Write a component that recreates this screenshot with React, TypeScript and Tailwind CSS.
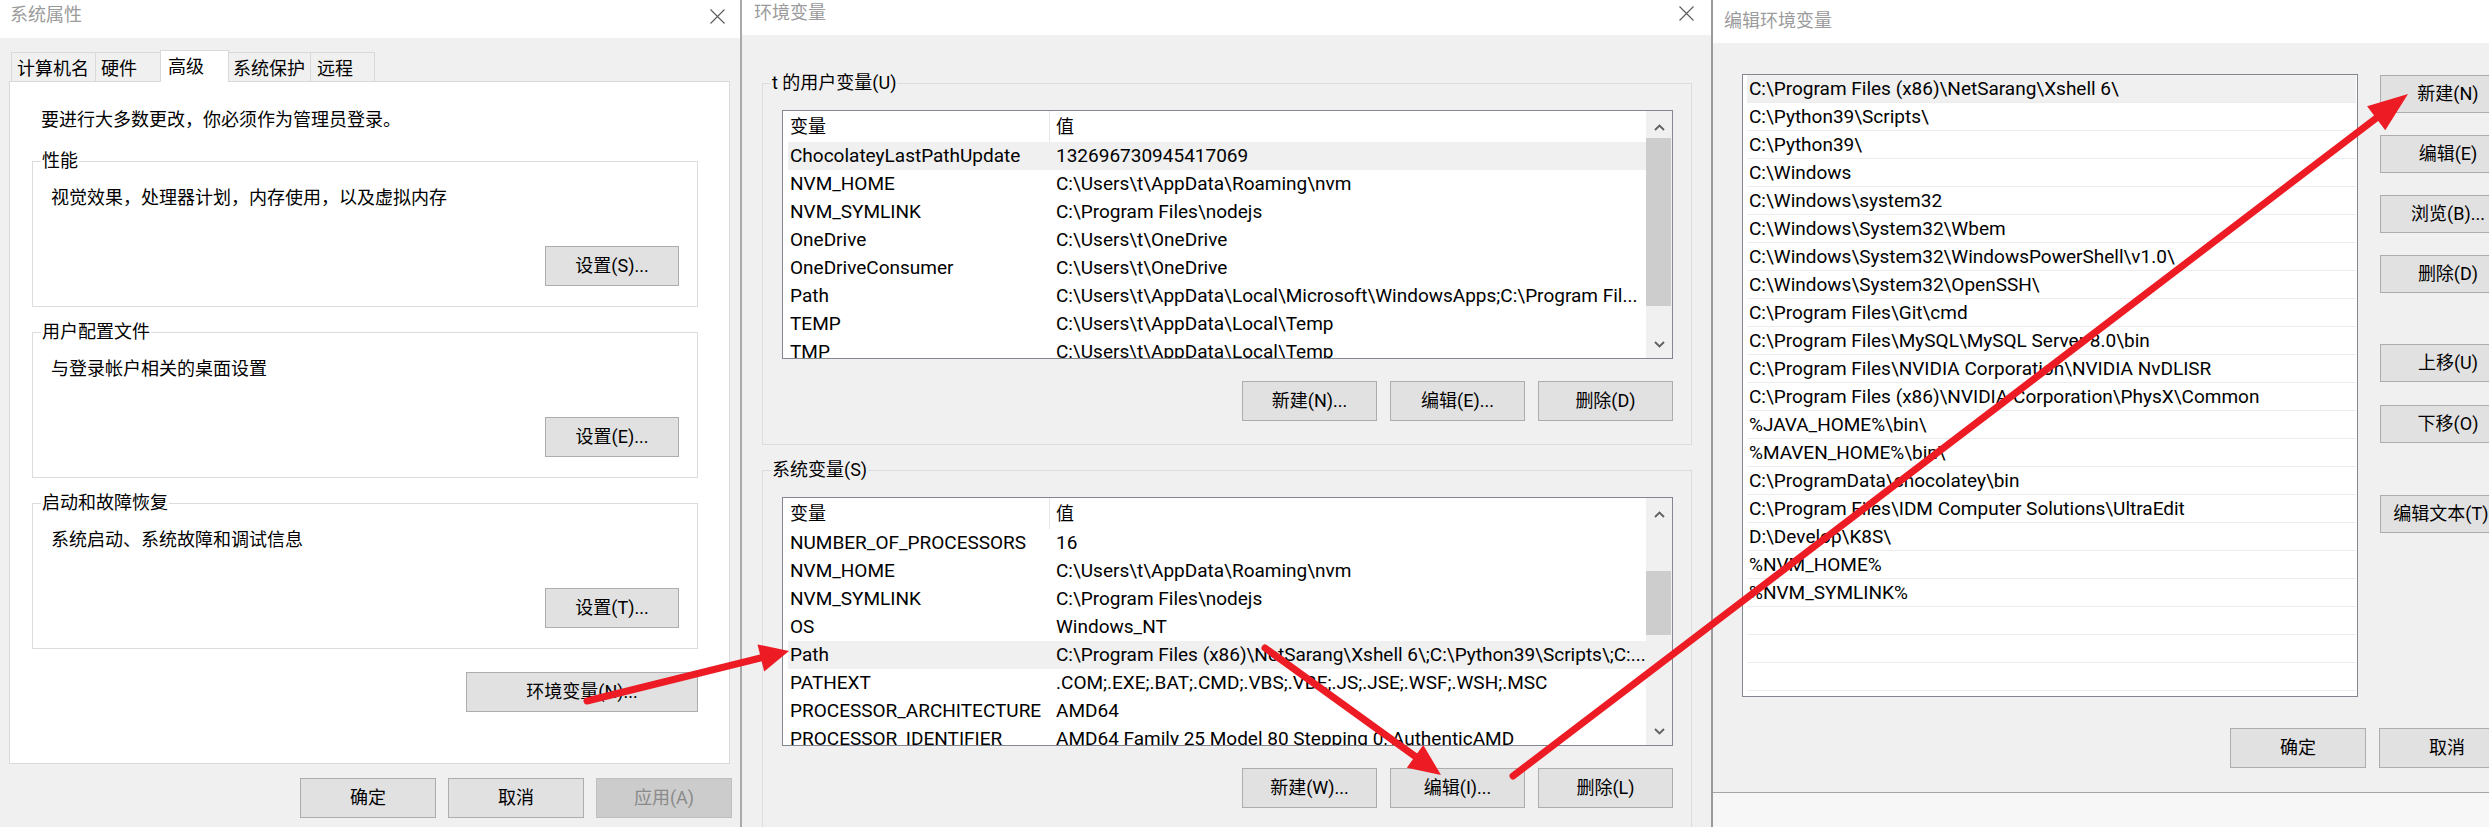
import React from 'react'

type Row = [string, string]

const userVars: Row[] = [
  ['ChocolateyLastPathUpdate', '132696730945417069'],
  ['NVM_HOME', 'C:\\Users\\t\\AppData\\Roaming\\nvm'],
  ['NVM_SYMLINK', 'C:\\Program Files\\nodejs'],
  ['OneDrive', 'C:\\Users\\t\\OneDrive'],
  ['OneDriveConsumer', 'C:\\Users\\t\\OneDrive'],
  ['Path', 'C:\\Users\\t\\AppData\\Local\\Microsoft\\WindowsApps;C:\\Program Fil...'],
  ['TEMP', 'C:\\Users\\t\\AppData\\Local\\Temp'],
  ['TMP', 'C:\\Users\\t\\AppData\\Local\\Temp'],
]

const systemVars: Row[] = [
  ['NUMBER_OF_PROCESSORS', '16'],
  ['NVM_HOME', 'C:\\Users\\t\\AppData\\Roaming\\nvm'],
  ['NVM_SYMLINK', 'C:\\Program Files\\nodejs'],
  ['OS', 'Windows_NT'],
  ['Path', 'C:\\Program Files (x86)\\NetSarang\\Xshell 6\\;C:\\Python39\\Scripts\\;C:...'],
  ['PATHEXT', '.COM;.EXE;.BAT;.CMD;.VBS;.VBE;.JS;.JSE;.WSF;.WSH;.MSC'],
  ['PROCESSOR_ARCHITECTURE', 'AMD64'],
  ['PROCESSOR_IDENTIFIER', 'AMD64 Family 25 Model 80 Stepping 0, AuthenticAMD'],
]

const pathEntries = [
  'C:\\Program Files (x86)\\NetSarang\\Xshell 6\\',
  'C:\\Python39\\Scripts\\',
  'C:\\Python39\\',
  'C:\\Windows',
  'C:\\Windows\\system32',
  'C:\\Windows\\System32\\Wbem',
  'C:\\Windows\\System32\\WindowsPowerShell\\v1.0\\',
  'C:\\Windows\\System32\\OpenSSH\\',
  'C:\\Program Files\\Git\\cmd',
  'C:\\Program Files\\MySQL\\MySQL Server 8.0\\bin',
  'C:\\Program Files\\NVIDIA Corporation\\NVIDIA NvDLISR',
  'C:\\Program Files (x86)\\NVIDIA Corporation\\PhysX\\Common',
  '%JAVA_HOME%\\bin\\',
  '%MAVEN_HOME%\\bin\\',
  'C:\\ProgramData\\chocolatey\\bin',
  'C:\\Program Files\\IDM Computer Solutions\\UltraEdit',
  'D:\\Develop\\K8S\\',
  '%NVM_HOME%',
  '%NVM_SYMLINK%',
  '',
  '',
  '',
]

const CloseIcon = () => (
  <svg width="15" height="15" viewBox="0 0 15 15" className="shrink-0">
    <path d="M0.5 0.5L14.5 14.5M14.5 0.5L0.5 14.5" stroke="#5a5a5a" strokeWidth="1.1" fill="none" />
  </svg>
)

const Chevron = ({ down = false }: { down?: boolean }) => (
  <svg width="11" height="7" viewBox="0 0 11 7">
    <path
      d={down ? 'M1 1L5.5 5.5L10 1' : 'M1 6L5.5 1.5L10 6'}
      stroke="#606060"
      strokeWidth="1.8"
      fill="none"
    />
  </svg>
)

const Btn = ({
  children,
  className = '',
  disabled = false,
}: {
  children: React.ReactNode
  className?: string
  disabled?: boolean
}) => (
  <button
    className={`flex shrink-0 items-center justify-center whitespace-nowrap border text-[18px] leading-[24px] ${
      disabled
        ? 'border-[#bfbfbf] bg-[#cccccc] text-[#8a8a8a]'
        : 'border-[#adadad] bg-[#e1e1e1] text-black'
    } ${className}`}
  >
    {children}
  </button>
)

const GroupBox = ({
  label,
  labelBg,
  className = '',
  children,
}: {
  label: string
  labelBg: string
  className?: string
  children: React.ReactNode
}) => (
  <div className={`relative shrink-0 border border-[#dcdcdc] ${className}`}>
    <span className={`absolute -top-[13px] left-[8px] px-px text-[18px] leading-[24px] whitespace-nowrap ${labelBg}`}>
      {label}
    </span>
    {children}
  </div>
)

const VarList = ({
  rows,
  highlight,
  thumbClass,
}: {
  rows: Row[]
  highlight: number
  thumbClass: string
}) => (
  <div className="flex h-[249px] shrink-0 overflow-hidden border border-[#828790] bg-white">
    <div className="min-w-0 flex-1 overflow-hidden">
      <div className="flex h-[31px] items-center text-[18px] leading-[24px]">
        <div className="flex h-full w-[267px] items-center border-r border-[#e5e5e5] pl-[7px]">变量</div>
        <div className="pl-[6px]">值</div>
      </div>
      {rows.map(([name, value], i) => (
        <div
          key={name + i}
          className={`ml-[5px] flex h-[28px] items-center whitespace-nowrap text-[19px] leading-[28px] ${
            i === highlight ? 'bg-[#f0f0f0]' : ''
          }`}
        >
          <div className="w-[261px] shrink-0 overflow-hidden pl-[2px]">{name}</div>
          <div className="min-w-0 flex-1 overflow-hidden pl-[7px]">{value}</div>
        </div>
      ))}
    </div>
    <div className="flex w-[26px] shrink-0 flex-col bg-[#f0f0f0]">
      <div className="flex h-[27px] shrink-0 items-center justify-center pt-[5px]">
        <Chevron />
      </div>
      <div className={`w-[25px] shrink-0 bg-[#cdcdcd] ${thumbClass}`} />
      <div className="flex-1" />
      <div className="flex h-[27px] shrink-0 items-center justify-center">
        <Chevron down />
      </div>
    </div>
  </div>
)

const SystemProps = () => {
  const tabs = [
    { label: '计算机名', cls: 'w-[85px] pl-[5px]' },
    { label: '硬件', cls: 'w-[66px] pl-[5px] -ml-px' },
    { label: '高级', cls: 'w-[69px] pl-[7px] -ml-px', active: true },
    { label: '系统保护', cls: 'w-[83px] pl-[4px] -ml-px' },
    { label: '远程', cls: 'w-[65px] pl-[6px] -ml-px' },
  ]
  const groups = [
    { label: '性能', text: '视觉效果，处理器计划，内存使用，以及虚拟内存', btn: '设置(S)...', mt: 'mt-[29px]' },
    { label: '用户配置文件', text: '与登录帐户相关的桌面设置', btn: '设置(E)...', mt: 'mt-[25px]' },
    { label: '启动和故障恢复', text: '系统启动、系统故障和调试信息', btn: '设置(T)...', mt: 'mt-[25px]' },
  ]
  return (
    <div className="flex w-[740px] shrink-0 flex-col bg-[#f0f0f0]">
      <div className="flex h-[38px] shrink-0 items-start justify-between bg-white pl-[10px] pr-[15px]">
        <span className="mt-[3px] text-[18px] leading-[24px] text-[#9b9b9b]">系统属性</span>
        <div className="mt-[9px]">
          <CloseIcon />
        </div>
      </div>

      <div className="mt-[12px] flex h-[31px] shrink-0 items-end pl-[11px]">
        {tabs.map((t) =>
          t.active ? (
            <div
              key={t.label}
              className={`relative z-10 -mb-px flex h-[32px] items-center border-x border-t border-[#d9d9d9] bg-white text-[18px] leading-[24px] ${t.cls}`}
            >
              {t.label}
            </div>
          ) : (
            <div
              key={t.label}
              className={`flex h-[29px] items-center border-x border-t border-[#d9d9d9] pt-[3px] text-[18px] leading-[24px] ${t.cls}`}
            >
              {t.label}
            </div>
          )
        )}
      </div>

      <div className="ml-[9px] flex h-[683px] w-[721px] shrink-0 flex-col border border-[#d9d9d9] bg-white pl-[22px] pr-[31px] pt-[26px]">
        <p className="ml-[9px] text-[18px] leading-[24px]">要进行大多数更改，你必须作为管理员登录。</p>
        {groups.map((g) => (
          <GroupBox key={g.label} label={g.label} labelBg="bg-white" className={`${g.mt} flex flex-col pb-[20px] pl-[18px] pr-[18px] pt-[24px]`}>
            <p className="text-[18px] leading-[24px]">{g.text}</p>
            <Btn className="mt-[36px] h-[40px] w-[134px] self-end">{g.btn}</Btn>
          </GroupBox>
        ))}
        <Btn className="mt-[23px] h-[40px] w-[232px] self-end">环境变量(N)...</Btn>
      </div>

      <div className="mt-[14px] flex shrink-0 justify-end gap-[12px] pr-[8px]">
        <Btn className="h-[40px] w-[136px]">确定</Btn>
        <Btn className="h-[40px] w-[136px]">取消</Btn>
        <Btn className="h-[40px] w-[136px]" disabled>
          应用(A)
        </Btn>
      </div>
    </div>
  )
}

const EnvVars = () => (
  <div className="flex w-[971px] shrink-0 flex-col border-l-2 border-[#a9a9a9] bg-[#f0f0f0]">
    <div className="flex h-[35px] shrink-0 items-start justify-between bg-white pl-[12px] pr-[17px]">
      <span className="mt-px text-[18px] leading-[24px] text-[#9b9b9b]">环境变量</span>
      <div className="mt-[6px]">
        <CloseIcon />
      </div>
    </div>

    <div className="flex shrink-0 flex-col pl-[20px] pr-[19px]">
      <GroupBox label="t 的用户变量(U)" labelBg="bg-[#f0f0f0]" className="mt-[48px] flex flex-col pb-[23px] pl-[19px] pr-[18px] pt-[26px]">
        <VarList rows={userVars} highlight={0} thumbClass="h-[168px]" />
        <div className="mt-[22px] flex justify-end gap-[13px]">
          <Btn className="h-[40px] w-[135px]">新建(N)...</Btn>
          <Btn className="h-[40px] w-[135px]">编辑(E)...</Btn>
          <Btn className="h-[40px] w-[135px]">删除(D)</Btn>
        </div>
      </GroupBox>

      <GroupBox label="系统变量(S)" labelBg="bg-[#f0f0f0]" className="mt-[25px] flex flex-col pb-[23px] pl-[19px] pr-[18px] pt-[26px]">
        <VarList rows={systemVars} highlight={4} thumbClass="mt-[46px] h-[64px]" />
        <div className="mt-[22px] flex justify-end gap-[13px]">
          <Btn className="h-[40px] w-[135px]">新建(W)...</Btn>
          <Btn className="h-[40px] w-[135px]">编辑(I)...</Btn>
          <Btn className="h-[40px] w-[135px]">删除(L)</Btn>
        </div>
      </GroupBox>
    </div>
  </div>
)

const sideButtons: [string, string][] = [
  ['新建(N)', 'mt-px'],
  ['编辑(E)', 'mt-[22px]'],
  ['浏览(B)...', 'mt-[22px]'],
  ['删除(D)', 'mt-[22px]'],
  ['上移(U)', 'mt-[51px]'],
  ['下移(O)', 'mt-[23px]'],
  ['编辑文本(T)...', 'mt-[52px]'],
]

const EditEnv = () => (
  <div className="flex w-[829px] shrink-0 flex-col border-l-2 border-[#9a9a9a]">
    <div className="flex h-[43px] shrink-0 items-start bg-white pl-[11px]">
      <span className="mt-[9px] text-[18px] leading-[24px] text-[#9b9b9b]">编辑环境变量</span>
    </div>
    <div className="flex h-[750px] shrink-0 flex-col border-b border-[#a5a5a5] bg-[#f0f0f0] pl-[29px] pr-[25px] pt-[31px]">
      <div className="flex">
        <div className="h-[623px] w-[616px] shrink-0 overflow-hidden border border-[#828790] bg-white">
          {pathEntries.map((p, i) => (
            <div
              key={i}
              className={`ml-[4px] mr-px h-[28px] whitespace-nowrap border-b border-[#ececec] pl-[2px] text-[19px] leading-[27px] ${
                i === 0 ? 'bg-[#f0f0f0]' : ''
              }`}
            >
              {p}
            </div>
          ))}
        </div>
        <div className="ml-[22px] flex flex-col">
          {sideButtons.map(([label, mt]) => (
            <Btn key={label} className={`h-[38px] w-[136px] ${mt}`}>
              {label}
            </Btn>
          ))}
        </div>
      </div>
      <div className="mt-[31px] flex justify-end gap-[13px]">
        <Btn className="h-[40px] w-[136px]">确定</Btn>
        <Btn className="h-[40px] w-[136px]">取消</Btn>
      </div>
    </div>
    <div className="flex-1 bg-[#f7f7f7]" />
  </div>
)

// red annotation arrows drawn over all three dialogs
const arrow = (x1: number, y1: number, x2: number, y2: number, len: number, half: number) => {
  const dx = x2 - x1
  const dy = y2 - y1
  const d = Math.hypot(dx, dy)
  const ux = dx / d
  const uy = dy / d
  const bx = x2 - ux * len
  const by = y2 - uy * len
  const nx = -uy
  const ny = ux
  return {
    line: `M${x1} ${y1}L${bx + ux * 4} ${by + uy * 4}`,
    head: `${x2},${y2} ${bx + nx * half},${by + ny * half} ${bx - nx * half},${by - ny * half}`,
  }
}

const Arrows = () => {
  const list = [
    arrow(587, 701, 789, 651, 29, 14),
    arrow(1265, 648, 1441, 775, 32, 14),
    arrow(1513, 776, 2408, 94, 40, 15),
  ]
  return (
    <svg className="pointer-events-none absolute inset-0" width="2489" height="827" viewBox="0 0 2489 827">
      {list.map((a, i) => (
        <g key={i}>
          <path d={a.line} stroke="#ed1c24" strokeWidth="7" strokeLinecap="round" fill="none" />
          <polygon points={a.head} fill="#ed1c24" />
        </g>
      ))}
    </svg>
  )
}

export default function App() {
  return (
    <div className="relative flex h-[827px] w-[2489px] overflow-hidden bg-[#f0f0f0] font-['Roboto','Noto_Sans_CJK_SC',sans-serif] text-black">
      <SystemProps />
      <EnvVars />
      <EditEnv />
      <Arrows />
    </div>
  )
}
